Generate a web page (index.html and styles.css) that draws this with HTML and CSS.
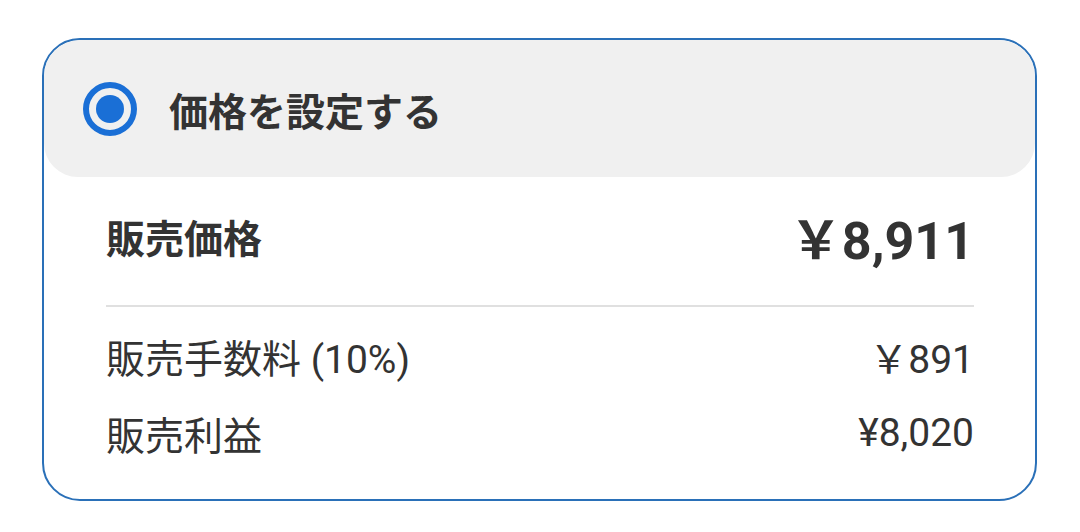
FILE: index.html
```html
<!DOCTYPE html>
<html lang="ja">
<head>
    <meta charset="UTF-8">
    <meta name="viewport" content="width=device-width, initial-scale=1.0">
    <title>価格を設定する</title>
    <link rel="stylesheet" href="styles.css">
</head>
<body>
    <div class="price-card">
        <div class="price-head">
            <svg class="radio" width="54" height="54" viewBox="0 0 54 54">
                <circle cx="27" cy="27" r="24" fill="none" stroke="#1a6fd6" stroke-width="6"/>
                <circle cx="27" cy="27" r="14" fill="#1a6fd6"/>
            </svg>
            <span class="head-label">価格を設定する</span>
        </div>
        <div class="price-body">
            <div class="row row-main">
                <span class="label">販売価格</span>
                <span class="value">￥8,911</span>
            </div>
            <div class="divider"></div>
            <div class="row">
                <span class="label">販売手数料 (10%)</span>
                <span class="value">￥891</span>
            </div>
            <div class="row">
                <span class="label">販売利益</span>
                <span class="value">¥8,020</span>
            </div>
        </div>
    </div>
</body>
</html>
```

FILE: styles.css
```css
body {
    font-family: Roboto, "Noto Sans CJK JP", sans-serif;
    background: #fff;
    color: #333;
    margin: 0;
}
.price-card {
    box-sizing: border-box;
    margin: 38px 0 0 42px;
    width: 995px;
    height: 463px;
    border: 2px solid #2a70b8;
    border-radius: 38px;
    overflow: hidden;
}
.price-head {
    display: flex;
    align-items: center;
    gap: 32px;
    height: 137px;
    padding-left: 39px;
    box-sizing: border-box;
    background: #f0f0f0;
    border-radius: 36px 36px 34px 34px;
}
.radio {
    display: block;
    flex-shrink: 0;
}
.head-label {
    font-size: 39px;
    font-weight: 700;
    color: #333;
}
.price-body {
    padding: 0 61px 0 62px;
}
.row {
    display: flex;
    justify-content: space-between;
    align-items: center;
    height: 77px;
    font-size: 39px;
}
.row-main {
    height: 128px;
    padding-bottom: 10px;
    box-sizing: border-box;
}
.row-main .label {
    font-weight: 700;
}
.row-main .value {
    font-size: 52px;
    font-weight: 700;
}
.divider {
    height: 2px;
    background: #e0e0e0;
    margin-bottom: 10px;
}
```
